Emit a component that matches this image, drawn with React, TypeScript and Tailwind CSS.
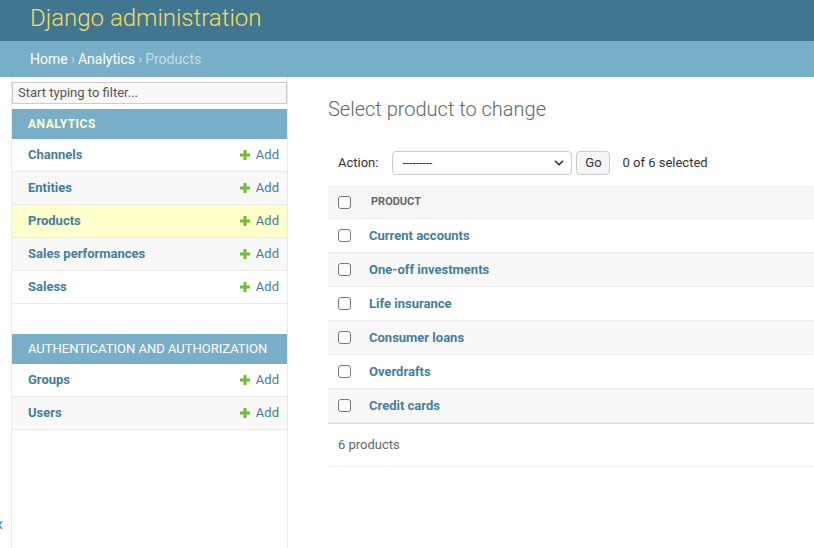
import { ChevronDown } from 'lucide-react'

const analytics = ['Channels', 'Entities', 'Products', 'Sales performances', 'Saless']
const auth = ['Groups', 'Users']
const products = ['Current accounts', 'One-off investments', 'Life insurance', 'Consumer loans', 'Overdrafts', 'Credit cards']

function AddLink() {
  return (
    <span className="flex items-center gap-[6px] text-[#447e9b] font-normal">
      <svg width="10" height="10" viewBox="0 0 10 10">
        <path d="M3.5 0h3v3.5H10v3H6.5V10h-3V6.5H0v-3h3.5z" fill="#70bf2b" />
      </svg>
      Add
    </span>
  )
}

function NavRow({ name, current, alt }: { name: string; current?: boolean; alt?: boolean }) {
  return (
    <div
      className={`flex items-center justify-between h-[33px] pl-4 pr-2 border-b border-[#eaeaea] text-[13px] leading-4 ${
        current ? 'bg-[#ffffcc]' : alt ? 'bg-[#f8f8f8]' : 'bg-white'
      }`}
    >
      <span className="font-bold text-[#447e9b]">{name}</span>
      <AddLink />
    </div>
  )
}

function Checkbox() {
  return <span className="block w-[13px] h-[13px] rounded-[3px] border border-[#767676] bg-white" />
}

export default function App() {
  return (
    <div className="min-h-[548px] flex flex-col font-['Roboto',sans-serif] text-[#333]">
      {/* header */}
      <div className="h-[41px] bg-[#417690] flex items-center pl-[30px] pb-[5px]">
        <h1 className="text-[24px] font-light text-[#f5dd5d] leading-none">Django administration</h1>
      </div>
      <div className="h-[36px] bg-[#79aec8] flex items-center pl-[30px] text-[14px] text-[#c4dce8]">
        <span className="text-white">Home</span>
        <span className="mx-[3px]">›</span>
        <span className="text-white">Analytics</span>
        <span className="mx-[3px]">›</span>
        <span>Products</span>
      </div>

      <div className="flex flex-1 overflow-hidden">
        {/* collapse toggle */}
        <div className="w-[12px] shrink-0 border-r border-[#eaeaea] flex flex-col justify-end pb-[14px] overflow-hidden">
          <span className="-ml-[6px] text-[20px] leading-5 text-[#447e9b]">«</span>
        </div>

        {/* sidebar */}
        <div className="w-[276px] shrink-0 border-r border-[#eaeaea]">
          <div className="mt-[5px] h-[22px] border border-[#cccccc] bg-[#f8f8f8] px-[5px] flex items-center text-[13px] text-[#555]">
            Start typing to filter...
          </div>
          <div className="mt-[5px] h-[30px] bg-[#79aec8] pl-4 flex items-center text-[12px] font-bold tracking-[0.5px] text-[#ffffcc]">
            ANALYTICS
          </div>
          {analytics.map((n, i) => (
            <NavRow key={n} name={n} current={n === 'Products'} alt={i % 2 === 1} />
          ))}
          <div className="mt-[30px] h-[30px] bg-[#79aec8] pl-4 flex items-center text-[13px] text-white whitespace-nowrap">
            AUTHENTICATION AND AUTHORIZATION
          </div>
          {auth.map((n, i) => (
            <NavRow key={n} name={n} alt={i % 2 === 1} />
          ))}
        </div>

        {/* content */}
        <div className="flex-1 pl-[40px] pt-[20px]">
          <h1 className="text-[20px] font-light text-[#666] leading-6 mb-[20px]">Select product to change</h1>

          <div className="flex items-center h-[44px] px-[10px] text-[13px]">
            <span className="text-[#333]">Action:</span>
            <div className="ml-[14px] w-[180px] h-[24px] border border-[#cccccc] rounded-[4px] bg-white flex items-center justify-between pl-[9px] pr-[5px]">
              <span className="text-[#333] text-[12px]">---------</span>
              <ChevronDown size={14} strokeWidth={3} className="text-[#333]" />
            </div>
            <div className="ml-[4px] w-[34px] h-[24px] border border-[#cccccc] rounded-[4px] bg-[#f5f5f5] flex items-center justify-center text-[#333]">
              Go
            </div>
            <span className="ml-[12px] text-[#333]">0 of 6 selected</span>
          </div>

          <div className="mt-[1px] border-t border-[#eeeeee]">
            <div className="flex items-center h-[32px] bg-[#f6f6f6] border-b border-[#eeeeee]">
              <div className="w-[43px] pl-[10px]">
                <Checkbox />
              </div>
              <span className="text-[11px] font-bold text-[#666]">PRODUCT</span>
            </div>
            {products.map((p, i) => (
              <div
                key={p}
                className={`flex items-center h-[34px] border-b border-[#eeeeee] ${i % 2 === 1 ? 'bg-[#f8f8f8]' : 'bg-white'}`}
              >
                <div className="w-[41px] pl-[10px]">
                  <Checkbox />
                </div>
                <span className="text-[13px] font-bold text-[#447e9b]">{p}</span>
              </div>
            ))}
            <div className="border-t border-[#dddddd] border-b border-b-[#eeeeee] h-[44px] flex items-center px-[10px] text-[13px] text-[#666]">
              6 products
            </div>
          </div>
        </div>
      </div>
    </div>
  )
}
